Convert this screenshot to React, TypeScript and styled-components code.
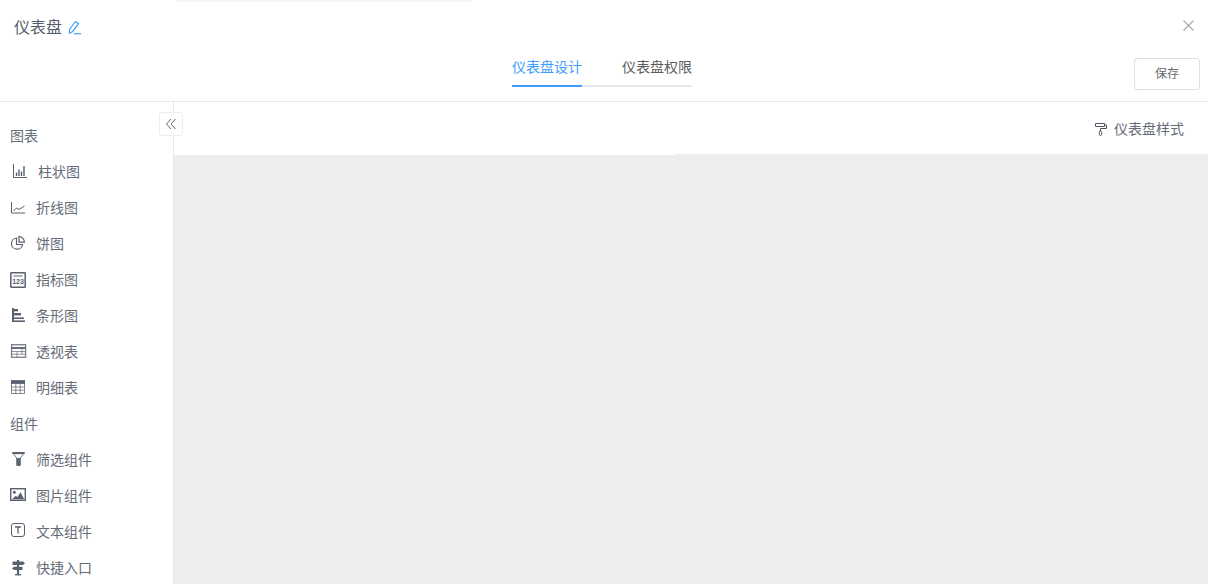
import React from "react";
import styled, { createGlobalStyle } from "styled-components";

const Global = createGlobalStyle`
  html, body { margin: 0; padding: 0; background: #fff; }
  body { font-family: "Noto Sans CJK SC", "Liberation Sans", sans-serif; }
  * { box-sizing: border-box; }
`;

const Page = styled.div`
  position: relative;
  width: 1208px;
  height: 584px;
  overflow: hidden;
  display: flex;
  flex-direction: column;
  background: #fff;
  &::before {
    content: "";
    position: absolute;
    left: 176px;
    top: 0;
    width: 296px;
    height: 2px;
    background: #f6f6f6;
    border-radius: 0 0 6px 6px;
  }
`;

const Header = styled.header`
  flex: none;
  height: 102px;
  border-bottom: 1px solid #e6e6e6;
  display: flex;
  flex-direction: column;
  padding: 15px 14px 0;
`;

const TitleRow = styled.div`
  height: 24px;
  display: flex;
  align-items: center;
  justify-content: space-between;
`;

const TitleGroup = styled.div`
  display: flex;
  align-items: center;
  gap: 6px;
`;

const Title = styled.h1`
  margin: 0 0 2px;
  font-size: 16px;
  line-height: 22px;
  font-weight: 400;
  color: #555d6b;
`;

const CloseButton = styled.button`
  width: 11px;
  height: 11px;
  margin-bottom: 3px;
  padding: 0;
  border: 0;
  background: none;
  display: flex;
  color: #a8a8a8;
`;

const NavRow = styled.div`
  position: relative;
  flex: 1;
  display: flex;
  justify-content: center;
  padding: 17px 4px 0 0;
`;

const Tabs = styled.div`
  display: flex;
  height: 31px;
  width: 180px;
`;

const Tab = styled.div<{ $active?: boolean }>`
  width: ${(p) => (p.$active ? "70px" : "110px")};
  height: 31px;
  font-size: 14px;
  line-height: 20px;
  text-align: ${(p) => (p.$active ? "left" : "right")};
  color: ${(p) => (p.$active ? "#409eff" : "#5c5c5c")};
  border-bottom: 2px solid ${(p) => (p.$active ? "#409eff" : "#e4e7ed")};
`;

const SaveButton = styled.button`
  position: absolute;
  right: -6px;
  top: 19px;
  width: 66px;
  height: 32px;
  border: 1px solid #dcdfe6;
  border-radius: 3px;
  background: #fff;
  font-family: inherit;
  font-size: 12px;
  color: #666a70;
  padding: 0 0 3px;
`;

const Body = styled.div`
  position: relative;
  flex: 1;
  min-height: 0;
  display: flex;
`;

const Sidebar = styled.aside`
  flex: none;
  width: 174px;
  border-right: 1px solid #e6e6e6;
  padding: 16px 0 0 10px;
`;

const SectionTitle = styled.div`
  height: 36px;
  font-size: 14px;
  line-height: 34px;
  color: #666c78;
`;

const Item = styled.div<{ $gap?: number }>`
  height: 36px;
  display: flex;
  align-items: center;
  gap: ${(p) => p.$gap ?? 10}px;
  font-size: 14px;
  color: #666c78;
`;

const Label = styled.span`
  margin-bottom: 2px;
`;

const IconSlot = styled.span`
  width: 16px;
  height: 16px;
  flex: none;
  display: flex;
  color: #59606e;
  svg {
    overflow: visible;
  }
`;

const CollapseButton = styled.button`
  position: absolute;
  left: 159px;
  top: 10px;
  width: 24px;
  height: 24px;
  padding: 0;
  border: 1px solid #ececec;
  border-radius: 3px;
  background: #fff;
  display: flex;
  align-items: center;
  justify-content: center;
  color: #5f6672;
`;

const Main = styled.main`
  flex: 1;
  min-width: 0;
  display: flex;
  flex-direction: column;
`;

const Toolbar = styled.div`
  position: relative;
  flex: none;
  height: 53px;
  display: flex;
  align-items: center;
  justify-content: flex-end;
  gap: 6px;
  padding: 0 24px 0 0;
  font-size: 14px;
  color: #666c78;
  &::after {
    content: "";
    position: absolute;
    left: 501px;
    right: 0;
    bottom: 0;
    height: 1px;
    background: #ededed;
  }
`;

const ToolIcon = styled.span`
  width: 14px;
  height: 14px;
  display: flex;
  color: #4f5663;
`;

const Canvas = styled.div`
  flex: 1;
  background: #ededed;
`;

const Svg = ({ children, size = 16 }: { children: React.ReactNode; size?: number }) => (
  <svg width={size} height={size} viewBox="0 0 16 16" fill="none" stroke="currentColor" strokeWidth="1">
    {children}
  </svg>
);

const BarIcon = () => (
  <Svg>
    <path d="M3.5 0v13.5H17" />
    <path d="M6.5 12V8.5M9 12V5.5M11.5 12V7.5M14 12V2" strokeWidth="1.4" />
  </Svg>
);
const LineIcon = () => (
  <Svg>
    <path d="M1.5 2v11H15" />
    <path d="M3.5 11l3-3 2.5 1.5L14.5 6" />
  </Svg>
);
const PieIcon = () => (
  <Svg>
    <path d="M6.5 2A5.6 5.6 0 1 0 12.6 8.5H6.5z" strokeWidth="1.2" />
    <path d="M9 0.7a5.4 5.4 0 0 1 5.4 5.5H9z" strokeWidth="1.2" />
  </Svg>
);
const KpiIcon = () => (
  <Svg>
    <rect x="0.8" y="0.8" width="14.4" height="14.4" rx="0.5" strokeWidth="1.5" />
    <path d="M3.5 4h9" />
    <text x="8" y="12" textAnchor="middle" fontSize="7" fontWeight="700" fill="currentColor" stroke="none" fontFamily="Liberation Sans, sans-serif">123</text>
  </Svg>
);
const HBarIcon = () => (
  <Svg>
    <path d="M3 0v14" strokeWidth="2" />
    <path d="M2 13.2h13" strokeWidth="1.6" />
    <path d="M3 2.2h5" strokeWidth="2.4" />
    <path d="M3 6.2h8" strokeWidth="2.4" />
    <path d="M3 10.2h11" strokeWidth="1.6" />
  </Svg>
);
const PivotIcon = () => (
  <Svg>
    <rect x="1.6" y="0.7" width="14" height="12.6" strokeWidth="1.3" opacity="0.8" />
    <path d="M1.6 4h14" strokeWidth="1.8" />
    <path d="M2 7.5h13M2 10.2h13M7 7.5v5.5M12 4.5v5.7" opacity="0.65" />
  </Svg>
);
const TableIcon = () => (
  <Svg>
    <rect x="1.5" y="0.5" width="13" height="13" opacity="0.75" />
    <path d="M1 2.2h14" strokeWidth="3.4" />
    <path d="M1.5 7h13M1.5 10.2h13M5.8 3.5v10M10.2 3.5v10" opacity="0.7" />
  </Svg>
);
const FilterIcon = () => (
  <Svg>
    <path d="M2.5 0.5h12L10.3 6v7.5H6.7V6z" opacity="0.85" />
    <path d="M2.5 1.2h12" strokeWidth="1.8" />
    <path d="M7.2 6.5h2.6v6.5H7.2z" fill="currentColor" />
  </Svg>
);
const ImageIcon = () => (
  <Svg>
    <rect x="0.7" y="0.7" width="14.6" height="11.6" strokeWidth="1.4" />
    <circle cx="4.3" cy="4.2" r="1.5" fill="currentColor" stroke="none" />
    <path d="M2 11.2l3.8-3.4 1.6 1.1 3.2-4.6 3.6 6.9z" fill="currentColor" stroke="none" />
  </Svg>
);
const TextIcon = () => (
  <Svg>
    <rect x="1.5" y="-0.5" width="13" height="13" rx="2.5" />
    <path d="M5 3h6M8 3v6.5" strokeWidth="1.3" />
  </Svg>
);
const SignIcon = () => (
  <Svg>
    <path d="M8 0v15" strokeWidth="2.2" />
    <path d="M2.5 1.5h10.5l2 1.8-2 1.8H2.5z" fill="currentColor" stroke="none" />
    <path d="M12.5 6.8H4L2 8.4 4 10h8.5z" fill="currentColor" stroke="none" />
    <path d="M5 14.8h6" strokeWidth="1.3" />
  </Svg>
);

type Entry = { label: string; icon: React.ReactNode; gap?: number };

const charts: Entry[] = [
  { label: "柱状图", icon: <BarIcon />, gap: 12 },
  { label: "折线图", icon: <LineIcon /> },
  { label: "饼图", icon: <PieIcon /> },
  { label: "指标图", icon: <KpiIcon /> },
  { label: "条形图", icon: <HBarIcon /> },
  { label: "透视表", icon: <PivotIcon /> },
  { label: "明细表", icon: <TableIcon /> },
];

const widgets: Entry[] = [
  { label: "筛选组件", icon: <FilterIcon /> },
  { label: "图片组件", icon: <ImageIcon /> },
  { label: "文本组件", icon: <TextIcon /> },
  { label: "快捷入口", icon: <SignIcon /> },
];

const Row = ({ entry }: { entry: Entry }) => (
  <Item $gap={entry.gap}>
    <IconSlot>{entry.icon}</IconSlot>
    <Label>{entry.label}</Label>
  </Item>
);

export default function App() {
  return (
    <Page>
      <Global />
      <Header>
        <TitleRow>
          <TitleGroup>
            <Title>仪表盘</Title>
            <svg width="14" height="15" viewBox="0 0 14 15" fill="none" stroke="#409eff" strokeWidth="1.2">
              <path d="M1.5 9.5L7.5 1.5l3 2.2L4.5 11.7 1.5 13z" />
              <path d="M6 13.7h7" />
            </svg>
          </TitleGroup>
          <CloseButton aria-label="关闭">
            <svg width="11" height="11" viewBox="0 0 11 11" fill="none" stroke="currentColor" strokeWidth="1.1">
              <path d="M0.5 0.5l10 10M10.5 0.5l-10 10" />
            </svg>
          </CloseButton>
        </TitleRow>
        <NavRow>
          <Tabs>
            <Tab $active>仪表盘设计</Tab>
            <Tab>仪表盘权限</Tab>
          </Tabs>
          <SaveButton>保存</SaveButton>
        </NavRow>
      </Header>
      <Body>
        <Sidebar>
          <SectionTitle>图表</SectionTitle>
          {charts.map((c) => (
            <Row key={c.label} entry={c} />
          ))}
          <SectionTitle>组件</SectionTitle>
          {widgets.map((c) => (
            <Row key={c.label} entry={c} />
          ))}
        </Sidebar>
        <CollapseButton aria-label="收起">
          <svg width="12" height="12" viewBox="0 0 12 12" fill="none" stroke="currentColor" strokeWidth="1">
            <path d="M6 1L1.5 6 6 11M10.5 1L6 6l4.5 5" />
          </svg>
        </CollapseButton>
        <Main>
          <Toolbar>
            <ToolIcon>
              <svg width="14" height="14" viewBox="0 0 14 14" fill="none" stroke="currentColor" strokeWidth="1">
                <path d="M1.5 1.5h9v3h-9z" />
                <path d="M10.5 3h2v3.5H6.5v2.5" />
                <rect x="5.3" y="9" width="2.4" height="4.5" rx="1.2" />
              </svg>
            </ToolIcon>
            <Label>仪表盘样式</Label>
          </Toolbar>
          <Canvas />
        </Main>
      </Body>
    </Page>
  );
}
